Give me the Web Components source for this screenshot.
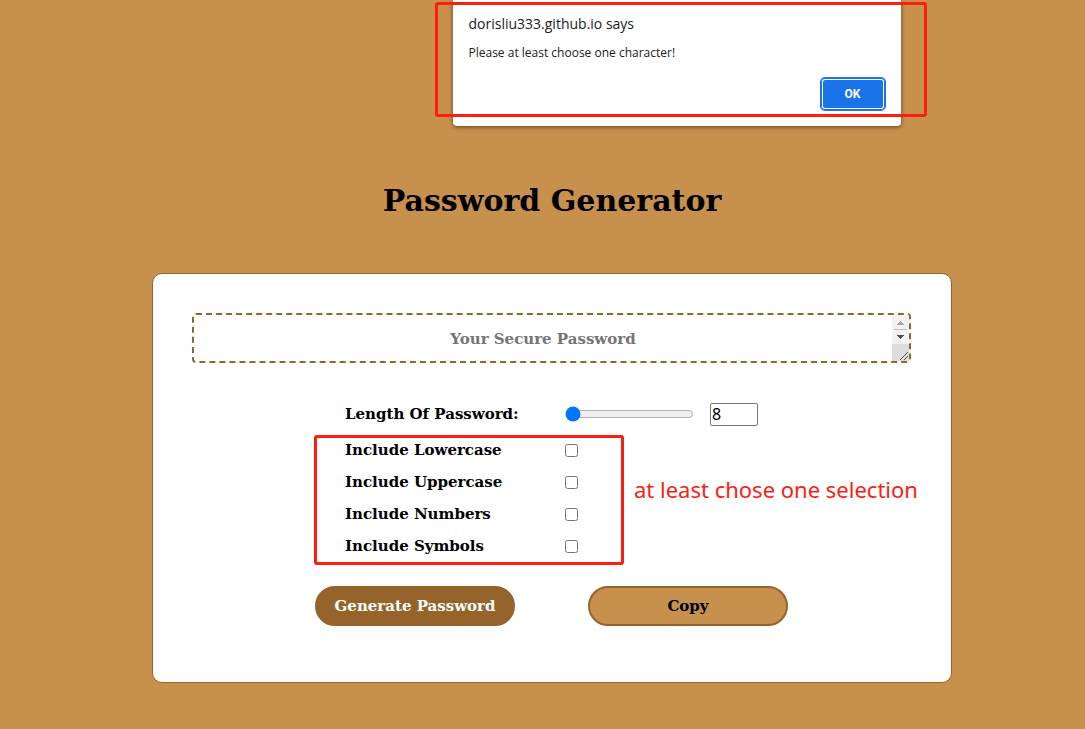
<!DOCTYPE html>
<html lang="en">
<head>
<meta charset="utf-8">
<meta name="viewport" content="width=device-width, initial-scale=1">
<title>Password Generator</title>
<style>
  :root { --tan: #c7904d; --brown: #94642a; --note: #ff1d12; --sans: "Noto Sans", "Open Sans", sans-serif; }
  body { margin: 0; min-height: 100vh; background: var(--tan); color: #000;
    font: bold 15px/20px "DejaVu Serif", serif; }
</style>
</head>
<body>
<password-page>
  <site-alert slot="alert" site="dorisliu333.github.io">Please at least choose one character!</site-alert>
  <span slot="title">Password Generator</span>
  <generator-card></generator-card>
</password-page>

<script>
class Base extends HTMLElement {
  constructor() {
    super();
    this.attachShadow({ mode: "open" }).innerHTML =
      "<style>*{box-sizing:border-box}</style>" + this.render();
  }
}

customElements.define("password-page", class extends Base {
  render() {
    return `<style>
      :host { display: block; position: relative; padding: 181px 16px 40px 35px; }
      h1 { margin: 0; font-size: 30px; line-height: 40px; text-align: center; }
      main { max-width: 800px; margin: 52px auto 0; }
    </style>
    <slot name="alert"></slot>
    <h1><slot name="title"></slot></h1>
    <main><slot></slot></main>`;
  }
});

customElements.define("site-alert", class extends Base {
  render() {
    return `<style>
      :host { position: absolute; top: 0; left: calc(50% - 90px); width: 448px; box-sizing: border-box;
        padding: 14px 16px 16px; background: #fff; border-radius: 0 0 4px 4px;
        box-shadow: 0 1px 4px rgba(0,0,0,.55); color: #202124; font: 12px/20px "Open Sans", var(--sans); }
      :host::after { content: ""; position: absolute; inset: 2px -26px 9px -18px;
        border: 3px solid var(--note); border-radius: 3px; pointer-events: none; }
      h2 { margin: 0; font-size: 14px; line-height: 20px; font-weight: normal; }
      p { margin: 9px 0 15px; }
      footer { display: flex; justify-content: flex-end; }
      button { width: 64px; height: 32px; margin: 0; padding: 0; border: 0; border-radius: 4px;
        background: #1a73e8; color: #fff; font: bold 12px/20px Roboto, sans-serif;
        box-shadow: inset 0 0 0 1px #1a73e8, inset 0 0 0 2px #fff, 0 0 0 1px #1a73e8; }
    </style>
    <h2></h2><p><slot></slot></p><footer><button type="button">OK</button></footer>`;
  }
  connectedCallback() {
    this.shadowRoot.querySelector("h2").textContent = this.getAttribute("site") + " says";
  }
});

customElements.define("password-output", class extends Base {
  render() {
    return `<style>
      :host { display: flex; height: 50px; box-sizing: border-box; border: 2px dashed var(--brown); border-radius: 4px; }
      textarea { flex: 1; min-width: 0; resize: none; overflow: hidden; border: 0; outline: 0; margin: 0;
        padding: 14px 2px 0; background: none; font: inherit; text-align: center; }
      textarea::placeholder { color: #757575; opacity: 1; }
      svg { width: 17px; height: 46px; flex: none; }
    </style>
    <textarea aria-label="Password" placeholder="Your Secure Password"></textarea>
    <svg viewBox="0 0 17 46" shape-rendering="crispEdges" aria-hidden="true">
      <path fill="#f1f1f1" d="M0 0h17v29H0z"/><path fill="#dcdcdc" d="M0 29h17v17H0z"/>
      <path fill="#c1c1c1" d="M2 14h13v1H2z"/>
      <path fill="#a3a3a3" d="M8 6h1v1h1v1h1v1h1v1H5V9h1V8h1V7h1z"/>
      <path fill="#505050" d="M5 20h7v1h-1v1h-1v1H9v1H8v-1H7v-1H6v-1H5z"/>
      <path fill="none" stroke="#555" shape-rendering="auto" d="M8 45l8-8M12 45l4-4"/>
    </svg>`;
  }
});

customElements.define("length-field", class extends Base {
  render() {
    return `<style>
      :host { display: grid; grid-template-columns: 220px 129px 48px; column-gap: 0; align-items: center;
        height: 40px; padding-left: 30px; }
      input { margin: 0; }
      input[type=range] { width: 129px; }
      input[type=number] { margin-left: 16px; width: 48px; height: 23px; padding: 1px; border: 1px solid #767676;
        border-radius: 2px; background: #fff; color: #000; font: 16px/20px var(--sans); appearance: textfield; }
      input::-webkit-inner-spin-button { appearance: none; margin: 0; }
    </style>
    <label for="range">Length Of Password:</label>
    <input id="range" type="range" min="8" max="30" value="8">
    <input id="number" type="number" min="8" max="30" value="8" aria-label="Password length">`;
  }
});

customElements.define("check-option", class extends Base {
  render() {
    return `<style>
      :host { display: grid; grid-template-columns: 220px auto; justify-content: start; align-items: center; height: 32px; }
      input { width: 13px; height: 13px; margin: 0; }
    </style>
    <label for="box"><slot></slot></label><input id="box" type="checkbox">`;
  }
});

customElements.define("option-group", class extends Base {
  render() {
    return `<style>
      :host { display: block; position: relative; width: 309px; }
      fieldset { border: 0; margin: 0; padding: 0 0 0 30px; min-width: 0; }
      :host::after { content: ""; position: absolute; inset: 1px 0 -3px -1px; border: 3px solid var(--note);
        border-radius: 3px; pointer-events: none; }
      p { position: absolute; top: 40px; left: 319px; margin: 0; white-space: nowrap; color: var(--note);
        font: 22px/30px var(--sans); }
    </style>
    <fieldset aria-label="Characters"><slot></slot></fieldset><p><slot name="note"></slot></p>`;
  }
});

customElements.define("pill-button", class extends Base {
  render() {
    return `<style>
      :host { display: block; }
      button { width: 200px; height: 40px; padding: 0; border: 2px solid var(--brown); border-radius: 20px;
        background: var(--tan); color: #000; font: inherit; }
      :host([primary]) button { background: var(--brown); color: #fff; }
    </style>
    <button type="button"><slot></slot></button>`;
  }
});

customElements.define("generator-card", class extends Base {
  render() {
    return `<style>
      :host { display: block; box-sizing: border-box; padding: 39px 40px 56px 39px; background: #fff;
        border: 1px solid var(--brown); border-radius: 10px; }
      form { max-width: 473px; margin: 31px auto 0; }
      .actions { display: flex; justify-content: space-between; margin-top: 24px; }
    </style>
    <password-output></password-output>
    <form>
      <length-field></length-field>
      <option-group>
        <check-option>Include Lowercase</check-option>
        <check-option>Include Uppercase</check-option>
        <check-option>Include Numbers</check-option>
        <check-option>Include Symbols</check-option>
        <span slot="note">at least chose one selection</span>
      </option-group>
      <div class="actions">
        <pill-button primary>Generate Password</pill-button>
        <pill-button>Copy</pill-button>
      </div>
    </form>`;
  }
});
</script>
</body>
</html>
